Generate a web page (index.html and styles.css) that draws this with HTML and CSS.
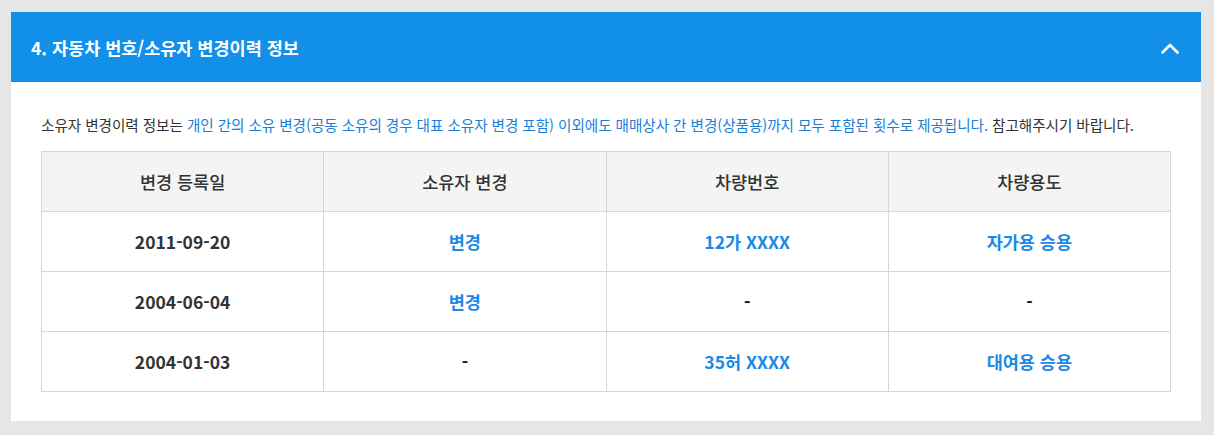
FILE: index.html
```html
<!DOCTYPE html>
<html lang="ko">
<head>
<meta charset="utf-8">
<link rel="stylesheet" href="styles.css">
</head>
<body>
<section class="card">
  <header class="card-head">
    <h2 class="card-title">4. 자동차 번호/소유자 변경이력 정보</h2>
    <svg class="chev" width="18" height="11" viewBox="0 0 18 11"><path d="M1.5 9.5 L9 2 L16.5 9.5" fill="none" stroke="#fff" stroke-width="2.6" stroke-linecap="round" stroke-linejoin="round"/></svg>
  </header>
  <div class="card-body">
    <p class="desc">소유자 변경이력 정보는 <span class="hl">개인 간의 소유 변경(공동 소유의 경우 대표 소유자 변경 포함) 이외에도 매매상사 간 변경(상품용)까지 모두 포함된 횟수로 제공됩니다.</span> 참고해주시기 바랍니다.</p>
    <table class="hist">
      <thead>
        <tr><th>변경 등록일</th><th>소유자 변경</th><th>차량번호</th><th>차량용도</th></tr>
      </thead>
      <tbody>
        <tr><td>2011-09-20</td><td class="b">변경</td><td class="b">12가 XXXX</td><td class="b">자가용 승용</td></tr>
        <tr><td>2004-06-04</td><td class="b">변경</td><td class="k">-</td><td class="k">-</td></tr>
        <tr><td>2004-01-03</td><td class="k">-</td><td class="b">35허 XXXX</td><td class="b">대여용 승용</td></tr>
      </tbody>
    </table>
  </div>
</section>
</body>
</html>
```
FILE: styles.css
```css
html, body {
  margin: 0;
  height: 100%;
}
body {
  background: #e6e6e6;
  padding: 12px 13px 0 11px;
  box-sizing: border-box;
  font-family: "Noto Sans CJK KR", "Noto Sans", sans-serif;
  color: #333;
}
.card {
  background: #fff;
  height: 409px;
}
.card-head {
  height: 70px;
  background: #128fe9;
  display: flex;
  align-items: center;
  justify-content: space-between;
  padding: 0 22px 0 20px;
}
.card-title {
  margin: 0;
  color: #fff;
  font-size: 17.5px;
  font-weight: 700;
}
.chev {
  display: block;
  margin-top: 3px;
}
.card-body {
  padding: 30px 30px 30px 30px;
}
.desc {
  margin: 0 0 13px;
  font-size: 14.6px;
  line-height: 26px;
  color: #333;
  letter-spacing: -0.05px;
}
.hl {
  color: #1a7ed6;
}
.hist {
  width: 100%;
  border-collapse: collapse;
  table-layout: fixed;
}
.hist th, .hist td {
  border: 1px solid #d6d6d6;
  height: 59px;
  padding: 0;
  text-align: center;
  font-size: 17.5px;
}
.hist th {
  background: #f4f4f4;
  font-weight: 500;
  color: #333;
}
.hist td {
  font-weight: 700;
  color: #333;
}
.hist td.b {
  color: #1a8ae6;
}
.hist td.k {
  color: #111;
}
```
